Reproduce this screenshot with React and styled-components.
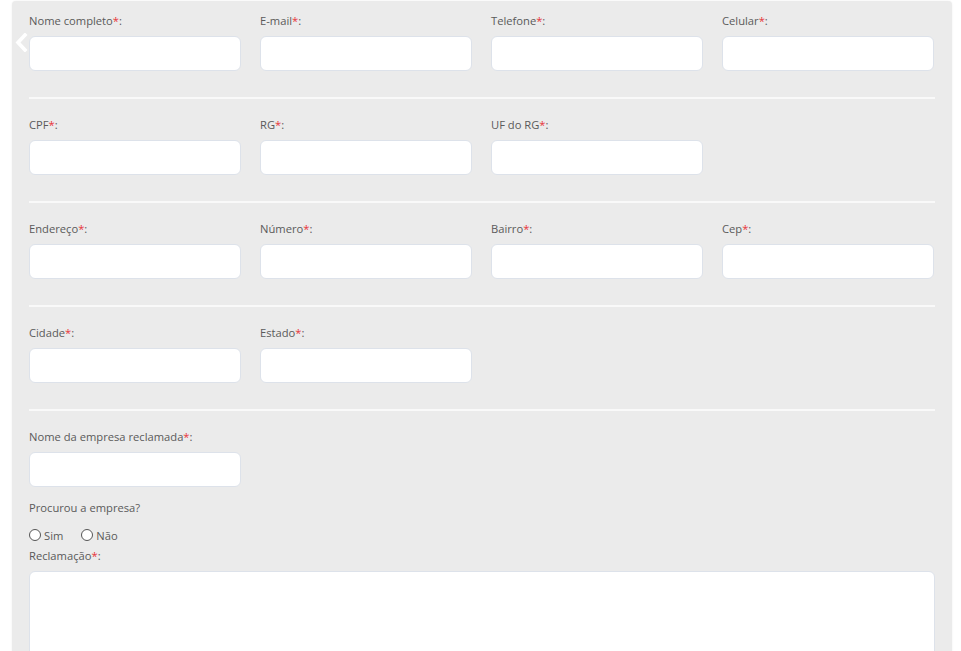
import React from 'react'
import styled, { createGlobalStyle } from 'styled-components'

const GlobalStyle = createGlobalStyle`
  html, body {
    margin: 0;
    padding: 0;
    background: #fff;
    font-family: "Open Sans", "Liberation Sans", sans-serif;
  }
`;

const rows = [
  ['Nome completo', 'E-mail', 'Telefone', 'Celular'],
  ['CPF', 'RG', 'UF do RG'],
  ['Endereço', 'Número', 'Bairro', 'Cep'],
  ['Cidade', 'Estado'],
];

function Field({ label }) {
  return (
    <FieldBox>
      <Label>{label}<Req>*</Req>:</Label>
      <Input type="text" />
    </FieldBox>
  );
}

export default function App() {
  return (
    <Page>
      <GlobalStyle />
      <Panel>
        <BackArrow>
          <svg width="14" height="19" viewBox="0 0 14 19">
            <polyline points="11,2 4,9.5 11,17" fill="none" stroke="#fff" strokeWidth="3.6" strokeLinecap="square" />
          </svg>
        </BackArrow>
        {rows.map((r, i) => (
          <Section key={i}>
            <Grid>
              {r.map((l) => <Field key={l} label={l} />)}
            </Grid>
          </Section>
        ))}
        <div>
          <Grid>
            <Field label="Nome da empresa reclamada" />
          </Grid>
          <Question>Procurou a empresa?</Question>
          <Radios>
            <RadioItem><Radio />Sim</RadioItem>
            <RadioItem><Radio />Não</RadioItem>
          </Radios>
          <Label>Reclamação<Req>*</Req>:</Label>
          <TextArea />
        </div>
      </Panel>
    </Page>
  );
}

const Page = styled.div`
  width: 961px;
  height: 651px;
  overflow: hidden;
  padding-left: 12px;
  box-sizing: border-box;
`;

const Panel = styled.div`
  position: relative;
  width: 940px;
  min-height: 700px;
  margin-top: 1px;
  background: #ebebeb;
  border-radius: 4px 4px 0 0;
  box-shadow: 0 0 2px rgba(0, 0, 0, 0.08);
  padding: 11px 17px 0;
  box-sizing: border-box;
`;

const BackArrow = styled.div`
  position: absolute;
  left: 2px;
  top: 32px;
  line-height: 0;
`;

const Section = styled.div`
  padding-bottom: 26px;
  margin-bottom: 17px;
  border-bottom: 2px solid #f9f9f9;
`;

const Grid = styled.div`
  display: grid;
  grid-template-columns: repeat(4, 212px);
  column-gap: 19px;
`;

const FieldBox = styled.div`
  display: flex;
  flex-direction: column;
`;

const Label = styled.div`
  font-size: 11.2px;
  line-height: 17px;
  color: #5a5a5a;
  margin-bottom: 7px;
`;

const Req = styled.span`
  color: #e8353a;
`;

const Input = styled.input`
  height: 35px;
  box-sizing: border-box;
  border: 1px solid #dde2ea;
  border-radius: 6px;
  background: #fff;
  outline: none;
  padding: 0 10px;
`;

const Question = styled.div`
  font-size: 11.2px;
  line-height: 17px;
  color: #5a5a5a;
  margin-top: 12px;
`;

const Radios = styled.div`
  display: flex;
  gap: 18px;
  margin-top: 10px;
  margin-bottom: 3px;
  height: 18px;
  align-items: center;
`;

const RadioItem = styled.label`
  display: flex;
  align-items: center;
  gap: 3px;
  font-size: 11.2px;
  color: #5a5a5a;
`;

const Radio = styled.span`
  width: 12px;
  height: 12px;
  box-sizing: border-box;
  border: 1.5px solid #555;
  border-radius: 50%;
  background: #fff;
  display: inline-block;
`;

const TextArea = styled.textarea`
  display: block;
  width: 906px;
  height: 150px;
  box-sizing: border-box;
  border: 1px solid #dde2ea;
  border-radius: 6px;
  background: #fff;
  resize: none;
  outline: none;
`;
